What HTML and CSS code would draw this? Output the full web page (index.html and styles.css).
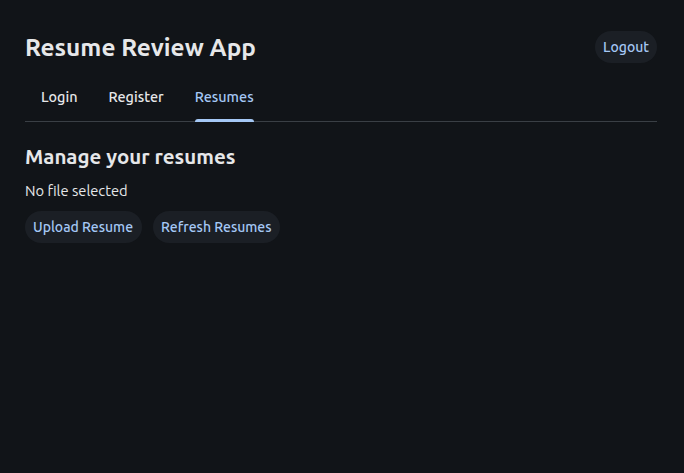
FILE: index.html
```html
<!DOCTYPE html>
<html>
<head>
<meta charset="utf-8">
<link rel="stylesheet" href="styles.css">
</head>
<body>
<div class="app">
  <header class="top">
    <h1 class="title">Resume Review App</h1>
    <button class="btn">Logout</button>
  </header>
  <nav class="tabs">
    <span class="tab">Login</span>
    <span class="tab">Register</span>
    <span class="tab active">Resumes</span>
  </nav>
  <section class="panel">
    <h2 class="heading">Manage your resumes</h2>
    <p class="file">No file selected</p>
    <div class="actions">
      <button class="btn">Upload Resume</button>
      <button class="btn">Refresh Resumes</button>
    </div>
  </section>
</div>
</body>
</html>
```
FILE: styles.css
```css
html, body {
  margin: 0;
  background: #111418;
}
body {
  font-family: Ubuntu, system-ui, "Noto Sans", sans-serif;
  color: #e6e7e9;
}
.app {
  padding: 24px 27px 0 25px;
}
.top {
  display: flex;
  justify-content: space-between;
  align-items: center;
  padding-top: 7px;
}
.title {
  margin: 0;
  font-size: 24.4px;
  font-weight: 700;
  line-height: 32px;
  color: #e6e7e9;
}
.btn {
  font-family: inherit;
  font-size: 14px;
  font-weight: 500;
  color: #a5c8f5;
  background: #1b1f25;
  border: none;
  border-radius: 16px;
  height: 32px;
  padding: 0 8px;
}
.tabs {
  display: flex;
  margin-top: 18px;
  border-bottom: 1px solid #3a3f45;
  padding-left: 16px;
  gap: 31px;
}
.tab {
  font-size: 14.4px;
  font-weight: 500;
  line-height: 20px;
  padding: 6px 0 14px;
  color: #e6e7e9;
  position: relative;
}
.tab.active {
  color: #a5c8f5;
}
.tab.active::after {
  content: "";
  position: absolute;
  left: 0; right: 0; bottom: -1px;
  height: 3px;
  border-radius: 3px 3px 0 0;
  background: #a5c8f5;
}
.heading {
  margin: 21px 0 0;
  font-size: 20.5px;
  font-weight: 700;
  line-height: 28px;
}
.file {
  margin: 10px 0 0;
  font-size: 14.7px;
  line-height: 20px;
}
.actions {
  display: flex;
  gap: 11px;
  margin-top: 10px;
}
.actions .btn:first-child {
  padding: 0 9px 0 8px;
}
```
